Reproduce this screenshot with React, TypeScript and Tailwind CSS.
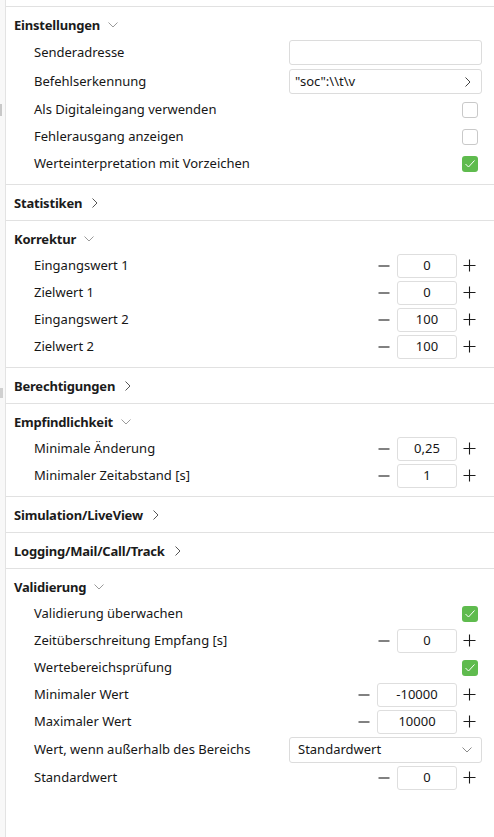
import { ReactNode } from 'react';

// Settings panel with collapsible groups
const font = { fontFamily: '"Noto Sans", "Open Sans", sans-serif' };

function ChevronDown({ className = '' }: { className?: string }) {
  return (
    <svg width="10" height="6" viewBox="0 0 10 6" className={className}>
      <path d="M0.5 0.5 L5 5 L9.5 0.5" fill="none" stroke="currentColor" strokeWidth="1" />
    </svg>
  );
}

function ChevronRight({ className = '' }: { className?: string }) {
  return (
    <svg width="6" height="10" viewBox="0 0 6 10" className={className}>
      <path d="M0.5 0.5 L5 5 L0.5 9.5" fill="none" stroke="currentColor" strokeWidth="1" />
    </svg>
  );
}

function Header({ title, open }: { title: string; open: boolean }) {
  return (
    <div className={`flex items-start pl-[8px] pt-[9px] ${open ? 'h-[31px]' : 'h-[35px]'}`}>
      <span className="text-[13px] leading-[18px] font-bold tracking-[-0.2px] text-[#1b1b1b]">{title}</span>
      {open ? (
        <ChevronDown className="ml-[8px] mt-[6px] text-[#9a9a9a]" />
      ) : (
        <ChevronRight className="ml-[10px] mt-[4px] text-[#555]" />
      )}
    </div>
  );
}

function Section({
  title,
  open = false,
  children,
}: {
  title: string;
  open?: boolean;
  children?: ReactNode;
}) {
  return (
    <div className="border-t border-[#e1e1e1]">
      <Header title={title} open={open} />
      {open && <div className="pb-[7px]">{children}</div>}
    </div>
  );
}

function Row({ label, tall = false, children }: { label: string; tall?: boolean; children?: ReactNode }) {
  return (
    <div className={`flex items-center pl-[28px] pr-[12px] ${tall ? 'h-[29px]' : 'h-[27px]'}`}>
      <span className="flex-1 text-[13px] text-[#161616]">{label}</span>
      {children}
    </div>
  );
}

function Checkbox({ checked = false }: { checked?: boolean }) {
  return checked ? (
    <div className="mr-[4px] flex h-[16px] w-[16px] items-center justify-center rounded-[3px] bg-[#5fbb4e]">
      <svg width="12" height="10" viewBox="0 0 12 10">
        <path d="M1.5 5 L4.5 8 L10.5 1.5" fill="none" stroke="#fff" strokeWidth="1" />
      </svg>
    </div>
  ) : (
    <div className="mr-[4px] h-[16px] w-[16px] rounded-[3px] border border-[#c9c9c9] bg-white" />
  );
}

function Stepper({ value, wide = false }: { value: string; wide?: boolean }) {
  return (
    <div className="flex items-center">
      <div className="flex w-[27px] justify-center">
        <svg width="12" height="2" viewBox="0 0 12 2">
          <path d="M0.5 1 H11.5" stroke="#1b1b1b" strokeWidth="1.1" />
        </svg>
      </div>
      <div
        className={`flex h-[24px] items-center justify-center rounded-[3px] border border-[#dedede] text-[13px] text-[#161616] ${
          wide ? 'w-[80px]' : 'w-[60px]'
        }`}
      >
        {value}
      </div>
      <div className="flex w-[25px] justify-center">
        <svg width="13" height="13" viewBox="0 0 13 13">
          <path d="M0.5 6.5 H12.5 M6.5 0.5 V12.5" stroke="#1b1b1b" strokeWidth="1.1" />
        </svg>
      </div>
    </div>
  );
}

export default function App() {
  return (
    <div className="flex h-[837px] w-[494px] bg-white" style={font}>
      <div className="flex w-[6px] flex-col border-r border-[#e3e3e3] bg-[#f8f8f8]">
        <div className="mt-[104px] h-[12px] w-[2px] bg-[#c8c8c8]" />
        <div className="mt-[272px] h-[10px] w-[3px] bg-[#d0d0d0]" />
      </div>
      <div className="flex-1 pt-[6px]">
        <Section title="Einstellungen" open>
          <Row label="Senderadresse" tall>
            <div className="h-[25px] w-[193px] rounded-[3px] border border-[#dcdcdc]" />
          </Row>
          <Row label="Befehlserkennung" tall>
            <div className="flex h-[25px] w-[193px] items-center justify-between rounded-[3px] border border-[#dcdcdc] pl-[5px] pr-[10px] text-[13px] text-[#161616]">
              <span>"soc":\\t\v</span>
              <ChevronRight className="text-[#444]" />
            </div>
          </Row>
          <Row label="Als Digitaleingang verwenden">
            <Checkbox />
          </Row>
          <Row label="Fehlerausgang anzeigen">
            <Checkbox />
          </Row>
          <Row label="Werteinterpretation mit Vorzeichen">
            <Checkbox checked />
          </Row>
        </Section>
        <Section title="Statistiken" />
        <Section title="Korrektur" open>
          <Row label="Eingangswert 1">
            <Stepper value="0" />
          </Row>
          <Row label="Zielwert 1">
            <Stepper value="0" />
          </Row>
          <Row label="Eingangswert 2">
            <Stepper value="100" />
          </Row>
          <Row label="Zielwert 2">
            <Stepper value="100" />
          </Row>
        </Section>
        <Section title="Berechtigungen" />
        <Section title="Empfindlichkeit" open>
          <Row label="Minimale Änderung">
            <Stepper value="0,25" />
          </Row>
          <Row label="Minimaler Zeitabstand [s]">
            <Stepper value="1" />
          </Row>
        </Section>
        <Section title="Simulation/LiveView" />
        <Section title="Logging/Mail/Call/Track" />
        <div className="border-t border-[#e1e1e1]">
          <Header title="Validierung" open />
          <Row label="Validierung überwachen">
            <Checkbox checked />
          </Row>
          <Row label="Zeitüberschreitung Empfang [s]">
            <Stepper value="0" />
          </Row>
          <Row label="Wertebereichsprüfung">
            <Checkbox checked />
          </Row>
          <Row label="Minimaler Wert">
            <Stepper value="-10000" wide />
          </Row>
          <Row label="Maximaler Wert">
            <Stepper value="10000" wide />
          </Row>
          <Row label="Wert, wenn außerhalb des Bereichs" tall>
            <div className="flex h-[26px] w-[193px] items-center justify-between rounded-[3px] border border-[#dcdcdc] pl-[8px] pr-[9px] text-[13px] text-[#161616]">
              <span>Standardwert</span>
              <ChevronDown className="text-[#8a8a8a]" />
            </div>
          </Row>
          <Row label="Standardwert">
            <Stepper value="0" />
          </Row>
        </div>
      </div>
    </div>
  );
}
